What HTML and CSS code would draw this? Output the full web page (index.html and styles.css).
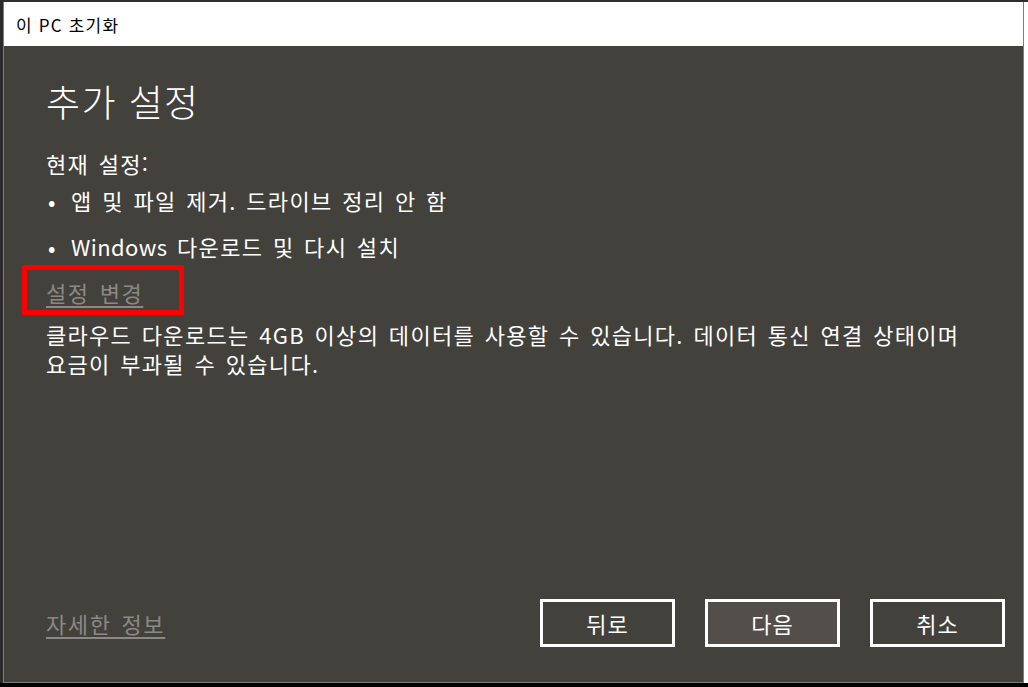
FILE: index.html
```html
<!DOCTYPE html>
<html lang="ko">
<head>
    <meta charset="UTF-8">
    <title>이 PC 초기화</title>
    <link rel="stylesheet" href="styles.css">
</head>
<body>
    <div class="top-line"></div>
    <div class="row">
        <div class="left-edge"></div>
        <div class="window">
            <div class="titlebar">이 PC 초기화</div>
            <div class="content">
                <h1>추가 설정</h1>
                <p class="label">현재 설정:</p>
                <ul class="settings">
                    <li>앱 및 파일 제거. 드라이브 정리 안 함</li>
                    <li><span class="latin">Windows</span> 다운로드 및 다시 설치</li>
                </ul>
                <div class="change-wrap">
                    <a class="link" href="#">설정 변경</a>
                    <span class="highlight"></span>
                </div>
                <p class="note">클라우드 다운로드는 4GB 이상의 데이터를 사용할 수 있습니다. 데이터 통신 연결 상태이며<br>요금이 부과될 수 있습니다.</p>
                <div class="footer">
                    <a class="link" href="#">자세한 정보</a>
                    <div class="buttons">
                        <button>뒤로</button>
                        <button class="primary">다음</button>
                        <button>취소</button>
                    </div>
                </div>
            </div>
        </div>
    </div>
    <div class="bottom-line"></div>
</body>
</html>
```

FILE: styles.css
```css
html, body {
    margin: 0;
    padding: 0;
    height: 687px;
    overflow: hidden;
}

body {
    background: #ffffff;
    font-family: "Noto Sans CJK KR", "Noto Sans", sans-serif;
    color: #ffffff;
}

.top-line {
    height: 2px;
    background: #2e2e2e;
}

.row {
    display: flex;
    height: 681px;
}

.left-edge {
    width: 3px;
    background: #2b2b2b;
}

.window {
    width: 1019px;
    border-left: 1px solid #7d7d7d;
    border-right: 1px solid #7d7d7d;
    border-bottom: 1px solid #7d7d7d;
    background: #43413c;
    display: flex;
    flex-direction: column;
}

.bottom-line {
    height: 4px;
    background: #000000;
}

.titlebar {
    height: 44px;
    background: #ffffff;
    color: #000000;
    font-size: 17px;
    letter-spacing: 1.2px;
    line-height: 46px;
    padding-left: 12px;
}

.content {
    flex: 1;
    display: flex;
    flex-direction: column;
    padding: 0 0 0 42px;
    letter-spacing: 1.3px;
    word-spacing: 2.2px;
}

h1 {
    margin: 30px 0 0;
    font-size: 37px;
    font-weight: 300;
    letter-spacing: 1.4px;
    word-spacing: 0;
    line-height: 50px;
}

.label {
    margin: 22px 0 0;
    font-size: 22px;
    line-height: 30px;
}

.settings {
    list-style: none;
    margin: 7px 0 0;
    padding: 0;
    font-size: 22px;
    line-height: 30px;
}

.settings li {
    margin-bottom: 16px;
    padding-left: 25px;
    position: relative;
}

.settings li::before {
    content: "•";
    position: absolute;
    left: 2px;
}

.latin {
    letter-spacing: 0.4px;
}

.change-wrap {
    position: relative;
    align-self: flex-start;
}

.link {
    color: #8b8984;
    font-size: 22px;
    line-height: 30px;
    letter-spacing: 1.6px;
    text-decoration: underline;
    text-underline-offset: 4px;
}

.highlight {
    position: absolute;
    left: -24px;
    top: -12px;
    width: 152px;
    height: 40px;
    border: 5px solid #ff0000;
}

.note {
    margin: 13px 0 0;
    font-size: 22px;
    line-height: 29px;
    white-space: nowrap;
}

.footer {
    margin-top: auto;
    margin-bottom: 35px;
    display: flex;
    align-items: center;
    justify-content: space-between;
    padding-right: 18px;
}

.buttons {
    display: flex;
    gap: 30px;
}

button {
    width: 135px;
    height: 48px;
    background: #43413c;
    border: 3px solid #ffffff;
    color: #ffffff;
    font-family: "Noto Sans CJK KR", "Noto Sans", sans-serif;
    font-size: 22px;
    letter-spacing: 1px;
    padding: 0;
}

button.primary {
    background: #534e4a;
}
```
